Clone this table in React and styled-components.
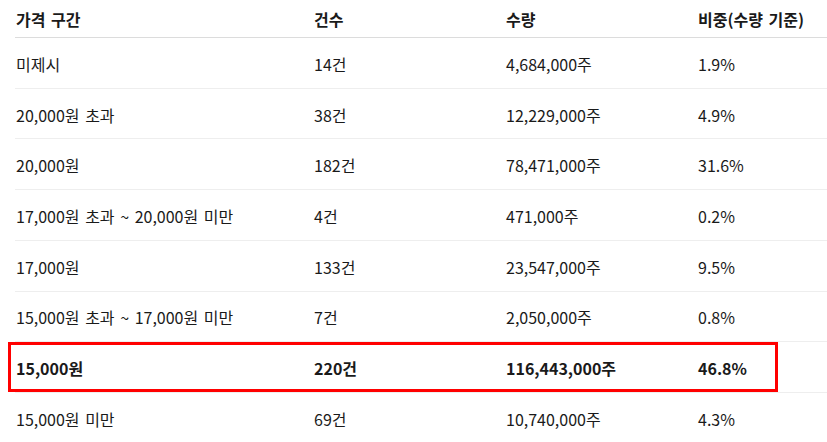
import React from "react";
import styled, {createGlobalStyle} from "styled-components";

const rows = [
    {range: '미제시', count: '14건', volume: '4,684,000주', share: '1.9%'},
    {range: '20,000원 초과', count: '38건', volume: '12,229,000주', share: '4.9%'},
    {range: '20,000원', count: '182건', volume: '78,471,000주', share: '31.6%'},
    {range: '17,000원 초과 ~ 20,000원 미만', count: '4건', volume: '471,000주', share: '0.2%'},
    {range: '17,000원', count: '133건', volume: '23,547,000주', share: '9.5%'},
    {range: '15,000원 초과 ~ 17,000원 미만', count: '7건', volume: '2,050,000주', share: '0.8%'},
    {range: '15,000원', count: '220건', volume: '116,443,000주', share: '46.8%', marked: true},
    {range: '15,000원 미만', count: '69건', volume: '10,740,000주', share: '4.3%'},
];

export default function App() {
    return (
        <>
            <GlobalStyle/>
            <Page>
                <Table>
                    <HeadRow>
                        <Cell>가격 구간</Cell>
                        <Cell>건수</Cell>
                        <Cell>수량</Cell>
                        <Cell>비중(수량 기준)</Cell>
                    </HeadRow>
                    {rows.map((row) => (
                        <Row key={row.range} $bold={row.marked}>
                            <Cell>{row.range}</Cell>
                            <Cell>{row.count}</Cell>
                            <Cell>{row.volume}</Cell>
                            <Cell>{row.share}</Cell>
                            {row.marked && <Highlight/>}
                        </Row>
                    ))}
                </Table>
            </Page>
        </>
    );
};

const GlobalStyle = createGlobalStyle`
    html, body {
        margin: 0;
        background: #ffffff;
    }
    body {
        font-family: "Noto Sans CJK KR", "Noto Sans", sans-serif;
        color: #1a1a1a;
    }
`;

const Page = styled.div`
    padding-left: 15px;
    width: 827px;
    box-sizing: border-box;
    overflow: hidden;
`;

const Table = styled.div`
    display: flex;
    flex-direction: column;
    width: 812px;
`;

const Row = styled.div`
    position: relative;
    display: grid;
    grid-template-columns: 298px 192px 192px 1fr;
    align-items: center;
    height: 50.71px;
    box-sizing: border-box;
    border-bottom: 1px solid #eeeeee;
    font-size: 16px;
    word-spacing: 2px;
    font-weight: ${(p) => (p.$bold ? 700 : 400)};
    padding-top: 2px;
`;

const HeadRow = styled(Row)`
    height: 38px;
    border-bottom-color: #dcdcdc;
    font-weight: 700;
    padding-top: 0;
`;

const Cell = styled.div`
    padding-left: 1px;
    white-space: nowrap;
`;

const Highlight = styled.div`
    position: absolute;
    left: -7px;
    top: 0;
    width: 770px;
    height: 50px;
    box-sizing: border-box;
    border: 3px solid #ff0000;
`;
